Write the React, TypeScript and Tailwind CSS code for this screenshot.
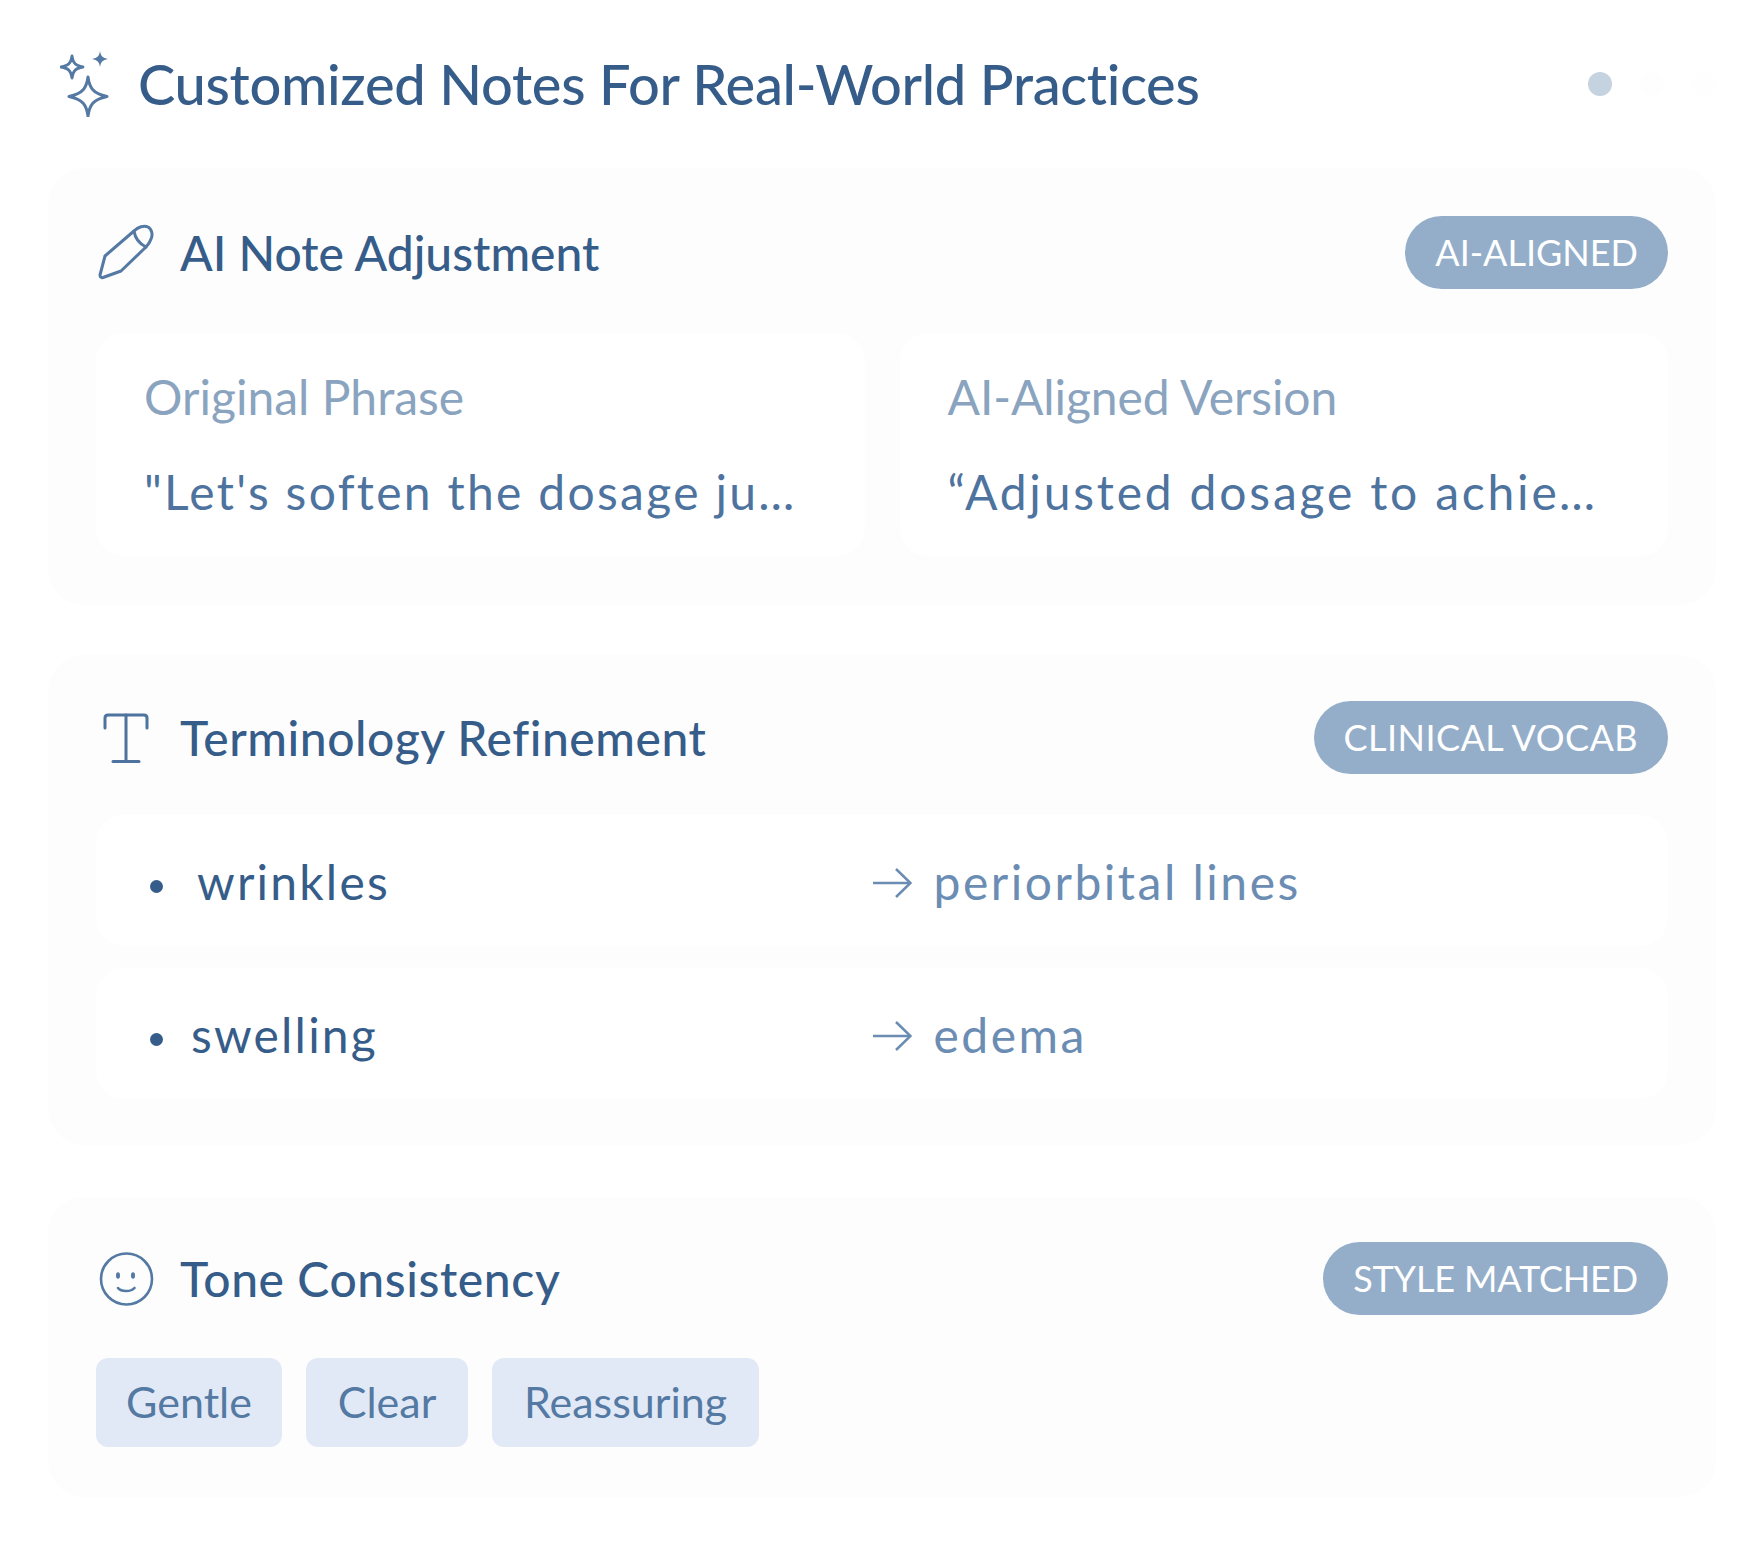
const font = "font-['Lato','Noto_Sans',sans-serif]"

function Sparkles() {
  return (
    <svg width="49" height="66" viewBox="0 0 49 66" fill="none" className="shrink-0 text-[#5479a3]">
      <path d="M28 26 C29.500 37 33 42.500 47 45.500 C33 48.500 29.500 54 28 65 C26.500 54 23 48.500 9 45.500 C23 42.500 26.500 37 28 26Z" stroke="currentColor" strokeWidth="3" strokeLinejoin="round" />
      <path d="M12 5 C13 12 15 14.500 23 16 C15 17.500 13 20 12 27 C11 20 9 17.500 1 16 C9 14.500 11 12 12 5Z" stroke="currentColor" strokeWidth="2.800" strokeLinejoin="round" />
      <path d="M40 0 C40.800 5 42.500 7 48 8 C42.500 9 40.800 11 40 16 C39.200 11 37.500 9 32 8 C37.500 7 39.200 5 40 0Z" fill="currentColor" />
    </svg>
  )
}

function Pencil() {
  return (
    <svg width="58" height="58" viewBox="0 0 58 58" fill="none" stroke="#5479a3" strokeWidth="3" strokeLinecap="round" strokeLinejoin="round" className="shrink-0">
      <g transform="translate(3 1)">
        <path d="M6 31 L35 6 C39 2 45 0 49 2 C53 4 54 10 52 14 C51 17 49 20 47 22 L22 46 L4 52.500 C2 53 1 52 1 50 Z" />
        <path d="M35 6 C36 13 41 19 47 22" />
      </g>
    </svg>
  )
}

function TextIcon() {
  return (
    <svg width="58" height="58" viewBox="0 0 58 58" fill="none" stroke="#4d739e" strokeWidth="3" strokeLinecap="round" strokeLinejoin="round" className="shrink-0">
      <path d="M9 19 V9 C9 7 10 6 12 6 H48 C50 6 51 7 51 9 V19" />
      <path d="M30 6 V52" />
      <path d="M17 52.500 H43" />
    </svg>
  )
}

function Smile() {
  return (
    <svg width="58" height="58" viewBox="0 0 58 58" fill="none" stroke="#5479a3" strokeWidth="2.600" strokeLinecap="round" className="shrink-0">
      <circle cx="30.500" cy="29" r="25.500" />
      <ellipse cx="22" cy="25.500" rx="2" ry="3.200" fill="#5479a3" stroke="none" />
      <ellipse cx="37" cy="25.500" rx="2" ry="3.200" fill="#5479a3" stroke="none" />
      <path d="M22 38 C25 42 35 42 38.500 38" />
    </svg>
  )
}

function Arrow() {
  return (
    <svg width="39" height="30" viewBox="0 0 39 30" fill="none" stroke="#6c8db3" strokeWidth="2.600" className="mt-[3px] shrink-0">
      <path d="M0 15 H37" />
      <path d="M23 1 L37.500 15 L23 29" />
    </svg>
  )
}

function SectionHead({ icon, title, tag, titleClass, tagClass }: { icon: React.ReactNode; title: string; tag: string; titleClass: string; tagClass: string }) {
  return (
    <div className="flex h-[73px] items-center justify-between">
      <div className="flex items-center gap-[26px]">
        {icon}
        <h2 className={`text-[48px] font-medium leading-none text-[#365d8a] ${titleClass}`}>{title}</h2>
      </div>
      <span className={`flex h-[73px] items-center rounded-full bg-[#94aeca] px-[30px] pb-[2px] text-[36px] text-white ${tagClass}`}>{tag}</span>
    </div>
  )
}

const terms = [
  { from: 'wrinkles', to: 'periorbital lines', gap: 'mr-[34px]' },
  { from: 'swelling', to: 'edema', gap: 'mr-[28px]' },
]

const chips = [
  { label: 'Gentle', width: 'w-[186px]' },
  { label: 'Clear', width: 'w-[162px]' },
  { label: 'Reassuring', width: 'w-[267px]' },
]

export default function App() {
  return (
    <div className={`min-h-[1544px] w-[1764px] bg-white px-[48px] pt-[50px] ${font}`}>
      <div className="mb-[50px] flex h-[68px] items-center">
        <div className="ml-[12px]"><Sparkles /></div>
        <h1 className="ml-[29px] text-[56px] font-medium leading-none tracking-[-0.3px] text-[#365d8a]">Customized Notes For Real-World Practices</h1>
        <div className="ml-auto flex gap-[28px]">
          <span className="h-6 w-6 rounded-full bg-[#c5d2df]" />
          <span className="h-6 w-6 rounded-full bg-[#fefefe]" />
          <span className="h-6 w-6 rounded-full bg-[#fefefe]" />
        </div>
      </div>

      <section className="mb-[50px] h-[437px] rounded-[36px] bg-[#fdfdfd] px-[48px] pt-[48px]">
        <SectionHead icon={<Pencil />} title="AI Note Adjustment" tag="AI-ALIGNED" titleClass="" tagClass="" />
        <div className="mt-[44px] grid grid-cols-2 gap-[35px]">
          <div className="h-[223px] rounded-[28px] bg-white px-[48px] pt-[34px]">
            <p className="text-[48px] leading-[60px] text-[#8aa4c0]">Original Phrase</p>
            <p className="mt-[35px] truncate text-[48px] leading-[60px] tracking-[2.3px] text-[#4d739e]">"Let's soften the dosage just a touch"</p>
          </div>
          <div className="h-[223px] rounded-[28px] bg-white px-[48px] pt-[34px]">
            <p className="text-[48px] leading-[60px] tracking-[-0.1px] text-[#8aa4c0]">AI-Aligned Version</p>
            <p className="mt-[35px] truncate text-[48px] leading-[60px] tracking-[2.8px] text-[#4d739e]">“Adjusted dosage to achieve balance”</p>
          </div>
        </div>
      </section>

      <section className="mb-[52px] h-[490px] rounded-[36px] bg-[#fdfdfd] px-[48px] pt-[46px]">
        <SectionHead icon={<TextIcon />} title="Terminology Refinement" tag="CLINICAL VOCAB" titleClass="tracking-[0.55px]" tagClass="tracking-[0.45px]" />
        <div className="mt-[41px] flex flex-col gap-[22px]">
          {terms.map((t) => (
            <div key={t.from} className="grid h-[131px] grid-cols-2 items-center rounded-[28px] bg-white pl-[53px] pt-[2px]">
              <div className="flex items-center text-[48px] tracking-[2.2px] text-[#365d8a]">
                <span className={`ml-[1px] mt-[9px] h-[13px] w-[13px] rounded-full bg-[#365d8a] ${t.gap}`} />
                {t.from}
              </div>
              <div className="ml-[-36px] flex items-center gap-[22px] text-[48px] tracking-[2.5px] text-[#6c8db3]">
                <Arrow />
                {t.to}
              </div>
            </div>
          ))}
        </div>
      </section>

      <section className="h-[300px] rounded-[36px] bg-[#fdfdfd] px-[48px] pt-[45px]">
        <SectionHead icon={<Smile />} title="Tone Consistency" tag="STYLE MATCHED" titleClass="tracking-[0.6px]" tagClass="tracking-[-0.15px]" />
        <div className="mt-[43px] flex gap-[24px]">
          {chips.map((c) => (
            <span key={c.label} className={`flex h-[89px] items-center justify-center rounded-[12px] bg-[#e2e9f6] text-[43px] text-[#5479a3] ${c.width}`}>{c.label}</span>
          ))}
        </div>
      </section>
    </div>
  )
}
